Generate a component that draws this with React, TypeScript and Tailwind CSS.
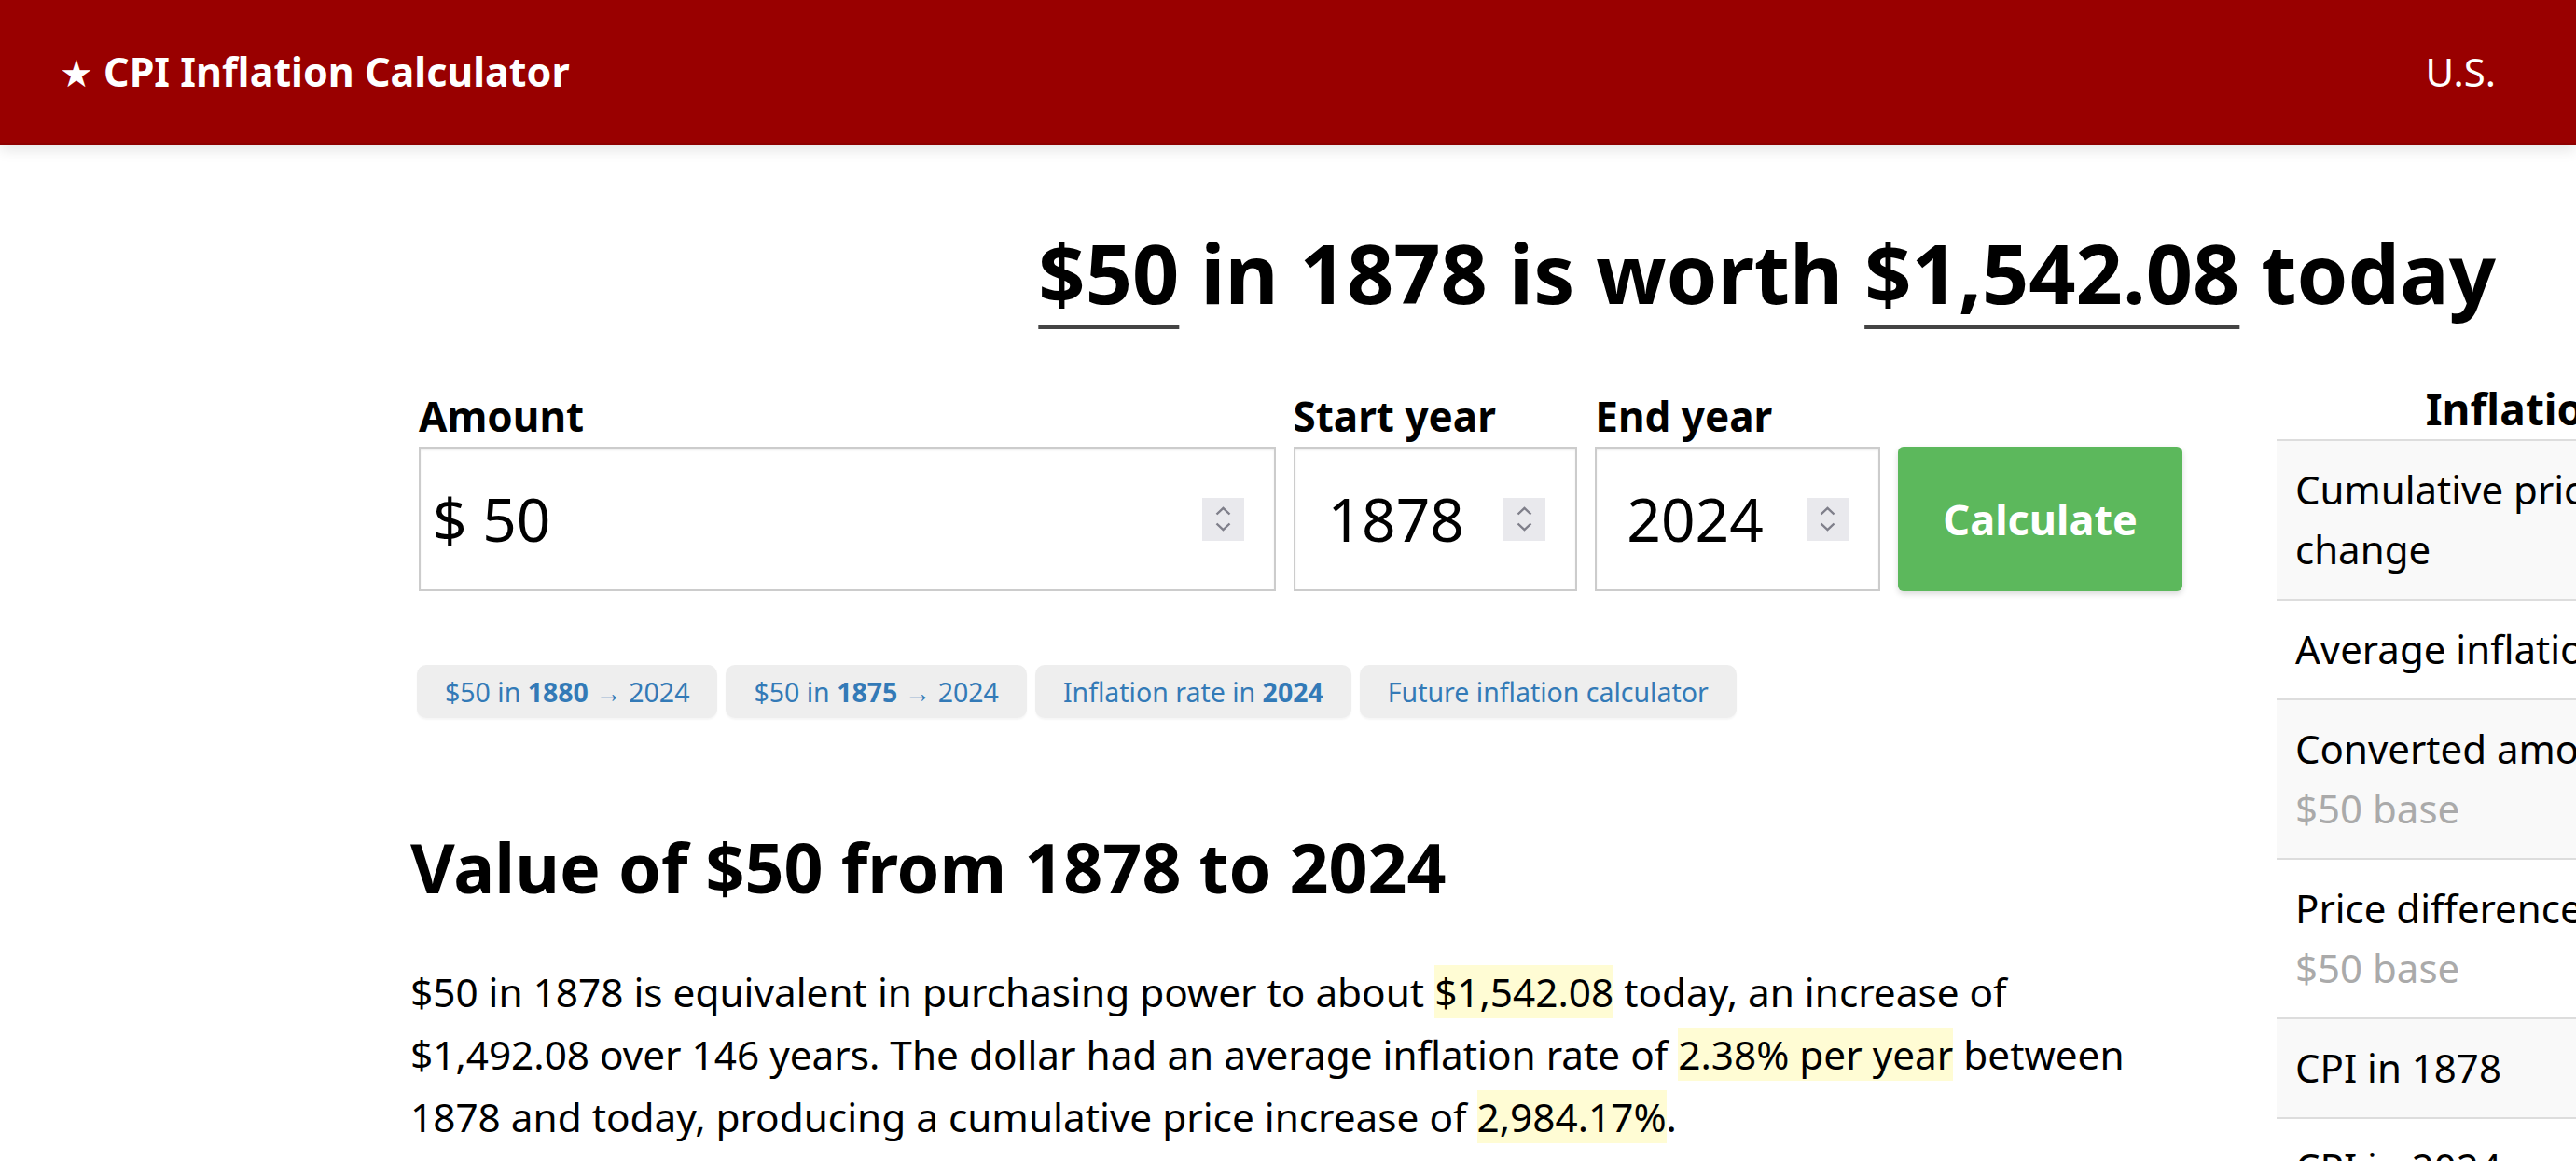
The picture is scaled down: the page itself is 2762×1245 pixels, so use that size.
import type { ReactNode } from "react";

const quickLinks: { pre: string; bold: string; post: string }[] = [
  { pre: "$50 in ", bold: "1880", post: " → 2024" },
  { pre: "$50 in ", bold: "1875", post: " → 2024" },
  { pre: "Inflation rate in ", bold: "2024", post: "" },
  { pre: "Future inflation calculator", bold: "", post: "" },
];

const summaryRows: { label: string; note?: string; value: string }[] = [
  { label: "Cumulative price change", value: "2,984.17%" },
  { label: "Average inflation rate", value: "2.38%" },
  { label: "Converted amount", note: "$50 base", value: "$1,542.08" },
  { label: "Price difference", note: "$50 base", value: "$1,492.08" },
  { label: "CPI in 1878", value: "10.171" },
  { label: "CPI in 2024", value: "313.689" },
];

function Stepper() {
  return (
    <div className="flex h-[46px] w-[45px] shrink-0 flex-col items-center justify-center gap-[7px] bg-[#e9e9ed]">
      <svg width="17" height="10" viewBox="0 0 17 10">
        <path d="M1.5 8.5 L8.5 1.8 L15.5 8.5" fill="none" stroke="#7f7f8a" strokeWidth="2.4" />
      </svg>
      <svg width="17" height="10" viewBox="0 0 17 10">
        <path d="M1.5 1.5 L8.5 8.2 L15.5 1.5" fill="none" stroke="#7f7f8a" strokeWidth="2.4" />
      </svg>
    </div>
  );
}

function Field({ label, width, children }: { label: string; width: string; children: ReactNode }) {
  return (
    <div className={`flex flex-col ${width}`}>
      <label className="mb-[7px] text-[44px] font-bold leading-[1.2] text-black">{label}</label>
      <div className="flex h-[155px] items-center justify-between border-2 border-[#ccc] bg-white pr-[32px] shadow-[inset_0_2px_2px_rgba(0,0,0,0.08)]">
        {children}
        <Stepper />
      </div>
    </div>
  );
}

function Mark({ children }: { children: ReactNode }) {
  return <span className="bg-[#fffcd4]">{children}</span>;
}

export default function App() {
  return (
    <div className="min-h-screen w-full overflow-hidden bg-white font-['Noto_Sans',sans-serif] text-black">
      {/* Top bar */}
      <header className="relative z-10 flex h-[155px] items-center justify-between border-b-2 border-[#8e0000] bg-[#990000] pl-[64px] pr-[86px] text-white shadow-[0_6px_14px_rgba(0,0,0,0.1)]">
        <div className="text-[43px] font-bold leading-none">
          <span className="font-['DejaVu_Sans',sans-serif] text-[40px]">★</span> CPI Inflation Calculator
        </div>
        <div className="text-[42px] leading-none">U.S.</div>
      </header>

      <h1 className="mt-[85px] pr-[86px] text-right text-[88px] font-bold leading-[1.2]">
        <span className="underline decoration-[#444] decoration-[5px] underline-offset-[22px] [text-decoration-skip-ink:none]">$50</span>{" "}
        in 1878 is worth{" "}
        <span className="underline decoration-[#444] decoration-[5px] underline-offset-[22px] [text-decoration-skip-ink:none]">$1,542.08</span>{" "}
        today
      </h1>

      <div className="mt-[65px] flex items-start gap-[101px] pl-[440px]">
        <main className="w-[1900px] shrink-0 pt-[9px]">
          <div className="ml-[9px] flex items-end gap-[19px]">
            <Field label="Amount" width="w-[919px]">
              <span className="pl-[13px] text-[64px] leading-none">$ 50</span>
            </Field>
            <Field label="Start year" width="w-[305px]">
              <span className="pl-[35px] text-[64px] leading-none">1878</span>
            </Field>
            <Field label="End year" width="w-[306px]">
              <span className="pl-[32px] text-[64px] leading-none">2024</span>
            </Field>
            <button className="h-[155px] w-[305px] rounded-[6px] bg-[#5cb85c] text-[45px] font-bold text-white shadow-[0_3px_6px_rgba(0,0,0,0.15)]">
              Calculate
            </button>
          </div>

          <div className="ml-[7px] mt-[79px] flex gap-[9px]">
            {quickLinks.map((l) => (
              <a
                key={l.pre + l.bold}
                className="flex h-[57px] items-center rounded-[10px] bg-[#eeeeee] px-[30px] text-[28.5px] text-[#337ab7] shadow-[0_2px_2px_rgba(0,0,0,0.04)]"
              >
                <span className="whitespace-pre">
                  {l.pre}
                  {l.bold && <b className="font-bold">{l.bold}</b>}
                  {l.post}
                </span>
              </a>
            ))}
          </div>

          <h2 className="mt-[116px] text-[73.5px] font-bold leading-[1.2]">Value of $50 from 1878 to 2024</h2>

          <p className="mt-[55px] text-[42.3px] leading-[67.2px]">
            $50 in 1878 is equivalent in purchasing power to about <Mark>$1,542.08</Mark> today, an increase of $1,492.08 over
            146 years. The dollar had an average inflation rate of <Mark>2.38% per year</Mark> between 1878 and today,
            producing a cumulative price increase of <Mark>2,984.17%</Mark>.
          </p>
        </main>

        <aside className="w-[748px] shrink-0">
          <div className="text-center text-[46px] font-bold leading-[1.2]">Inflation summary</div>
          <table className="mt-[5px] w-full border-collapse text-[42px] leading-[64px]">
            <tbody>
              {summaryRows.map((r, i) => (
                <tr key={r.label} className={`border-t-2 border-[#ddd] ${i % 2 === 0 ? "bg-[#f9f9f9]" : "bg-white"}`}>
                  <td className="w-[490px] px-[20px] py-[20.5px] align-top">
                    {r.label}
                    {r.note && <div className="text-[#aaa]">{r.note}</div>}
                  </td>
                  <td className="px-[20px] py-[20.5px] text-right align-top">{r.value}</td>
                </tr>
              ))}
            </tbody>
          </table>
        </aside>
      </div>
    </div>
  );
}
